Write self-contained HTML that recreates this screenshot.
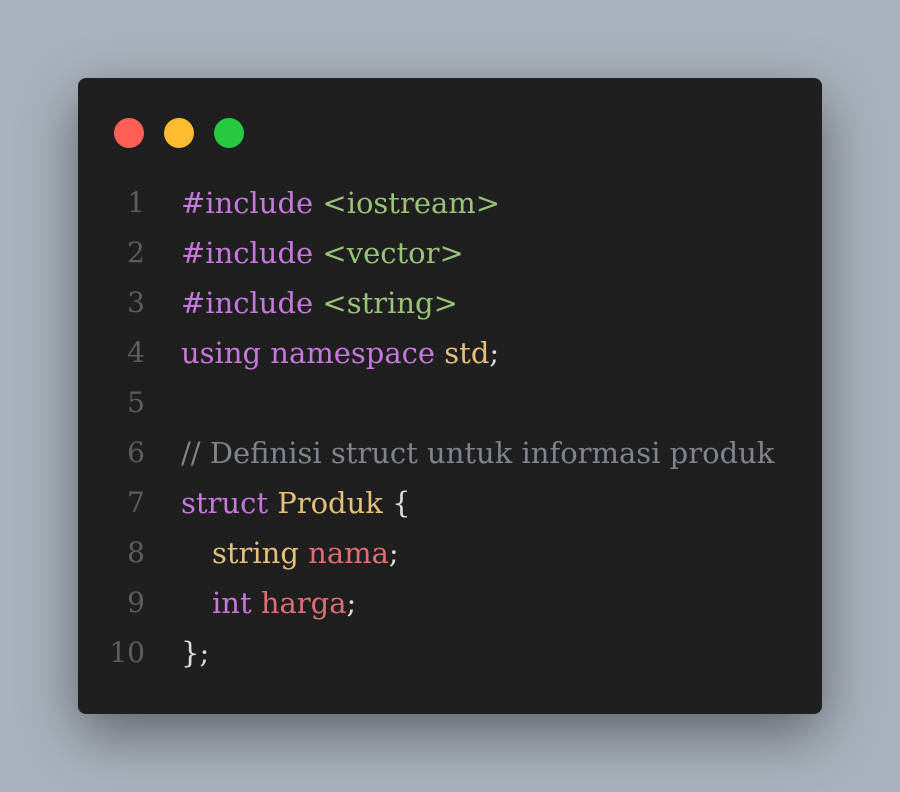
<!DOCTYPE html>
<html><head><style>
html,body{margin:0;padding:0}
body{width:900px;height:792px;background:#aab3bd;position:relative;overflow:hidden;font-family:"DejaVu Serif","Liberation Serif",serif}
.card{position:absolute;left:78px;top:78px;width:744px;height:636px;background:#1f1f1f;border-radius:8px;box-shadow:0 20px 60px rgba(0,0,0,.45)}
.dot{position:absolute;top:118px;width:30px;height:30px;border-radius:50%}
.ln{position:absolute;left:100px;width:45px;text-align:right;color:#5d5d5d;font-size:28px;line-height:50px}
.code{position:absolute;left:181px;font-size:29px;line-height:50px;color:#dcdcdc;white-space:nowrap}
.code div{height:50px}
.in{padding-left:31px}
.p{color:#c678dd}.g{color:#98c379}.y{color:#e5c07b}.r{color:#e06c75}.c{color:#7f848e}
</style></head><body>
<div class="card"></div>
<div class="dot" style="left:114px;background:#ff5f57"></div>
<div class="dot" style="left:164px;background:#febc2e"></div>
<div class="dot" style="left:214px;background:#28c840"></div>
<div class="ln" style="top:178px">1<br>2<br>3<br>4<br>5<br>6<br>7<br>8<br>9<br>10</div>
<div class="code" style="top:178px"><div><span class="p">#include</span> <span class="g">&lt;iostream&gt;</span></div><div><span class="p">#include</span> <span class="g">&lt;vector&gt;</span></div><div><span class="p">#include</span> <span class="g">&lt;string&gt;</span></div><div><span class="p">using namespace</span> <span class="y">std</span>;</div><div></div><div><span class="c">// Definisi struct untuk informasi produk</span></div><div><span class="p">struct</span> <span class="y">Produk</span> {</div><div class="in"><span class="y">string</span> <span class="r">nama</span>;</div><div class="in"><span class="p">int</span> <span class="r">harga</span>;</div><div>};</div></div>
</body></html>
